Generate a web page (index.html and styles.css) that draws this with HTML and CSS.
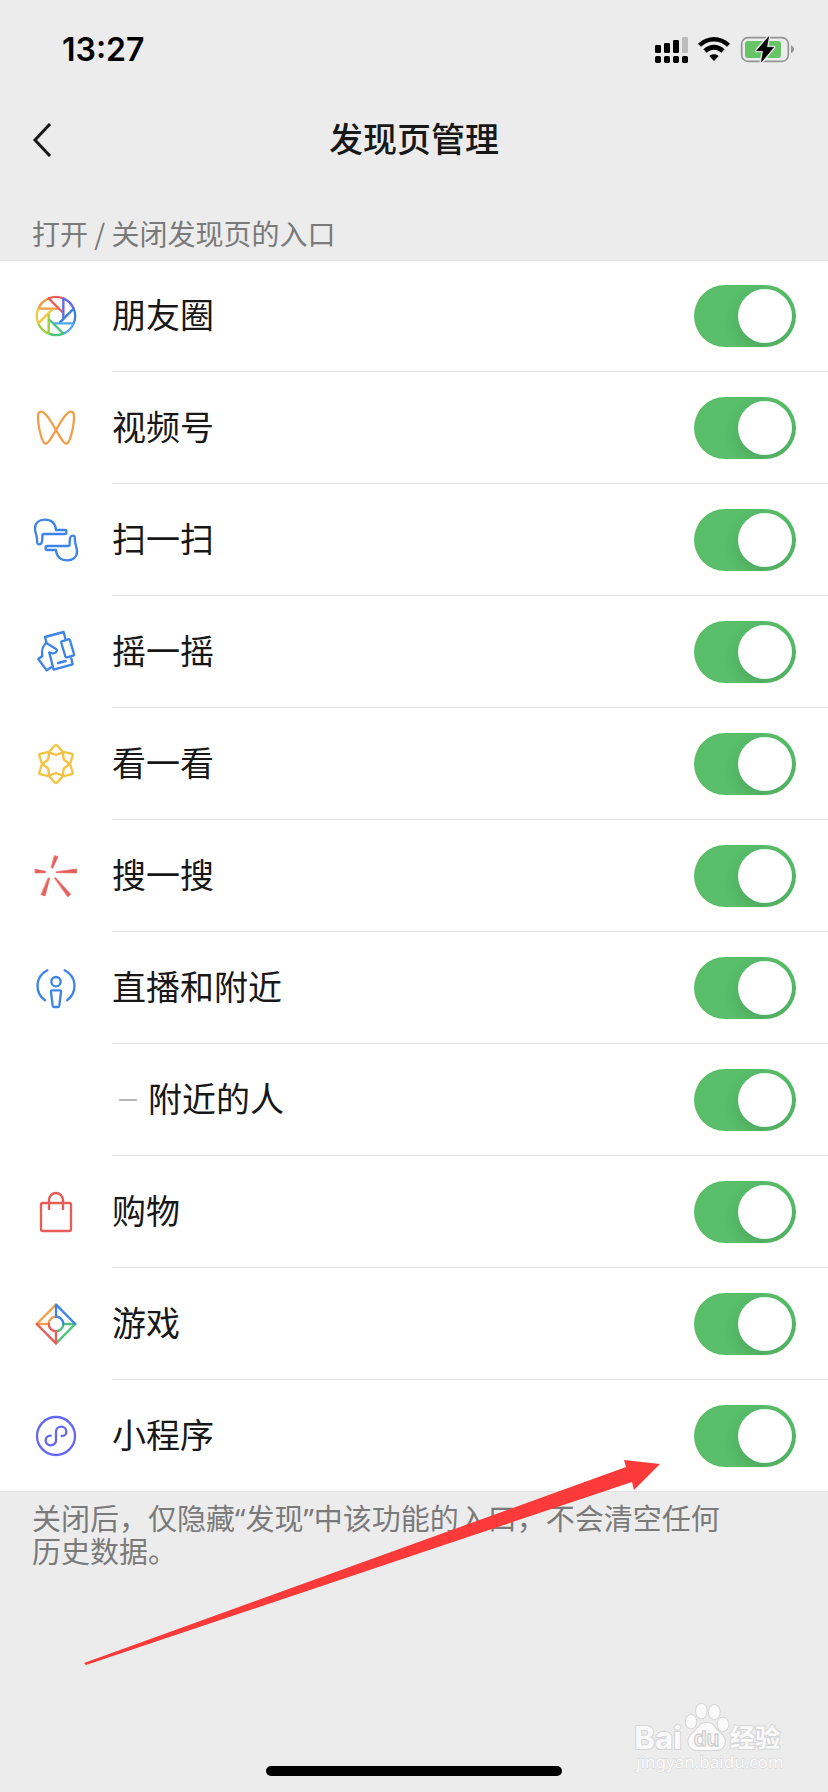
FILE: index.html
```html
<!DOCTYPE html>
<html lang="zh-CN">
<head>
<meta charset="utf-8">
<meta name="viewport" content="width=device-width, initial-scale=1">
<title>发现页管理</title>
<link rel="stylesheet" href="styles.css">
</head>
<body>
<div class="screen">
  <div class="status">
    <span class="clock">13:27</span>
    <div class="status-icons">
      <svg width="34" height="28" viewBox="102 48 102 84" aria-hidden="true">
        <rect x="105" y="75" width="18" height="24" rx="4"/>
        <rect x="132" y="69" width="18" height="30" rx="4"/>
        <rect x="159" y="60" width="18" height="39" rx="4"/>
        <rect x="186" y="51" width="18" height="48" rx="4" fill="#bdbdbd"/>
        <rect x="105" y="108" width="18" height="21" rx="5"/>
        <rect x="132" y="108" width="18" height="21" rx="5"/>
        <rect x="159" y="108" width="18" height="21" rx="5"/>
        <rect x="186" y="108" width="18" height="21" rx="5"/>
      </svg>
      <svg width="32" height="28" viewBox="238 48 96 84" aria-hidden="true">
        <path d="M238 71C266 44 306 44 334 71L325 80C303 59 269 59 247 80Z"/>
        <path d="M254 88C273 70 299 70 318 88L308 98C295 86 277 86 264 98Z"/>
        <path d="M272 108C280 101 292 101 300 108L286 123Z"/>
      </svg>
      <svg width="54" height="28" viewBox="360 48 162 84" aria-hidden="true">
        <rect x="365" y="53" width="140" height="71" rx="19" fill="none" stroke="#949494" stroke-width="5"/>
        <path d="M513 76C525 81 525 95 513 100Z" fill="#949494"/>
        <rect x="375" y="63" width="108" height="51" rx="10" fill="#65c466"/>
        <path d="M446 50L410 92H430L424 126L461 82H440Z" stroke="#ececec" stroke-width="10" stroke-linejoin="round"/>
        <path d="M446 50L410 92H430L424 126L461 82H440Z" stroke="#000" stroke-width="2" stroke-linejoin="round"/>
      </svg>
    </div>
  </div>

  <header class="nav">
    <button class="back" type="button" aria-label="返回">
      <svg width="20" height="36" viewBox="0 0 20 36" aria-hidden="true"><path d="M18 2L3 18L18 34" fill="none" stroke="#181818" stroke-width="3"/></svg>
    </button>
    <h1 class="title">发现页管理</h1>
  </header>

  <main class="content">
    <h2 class="caption">打开 / 关闭发现页的入口</h2>
    <ul class="list">
      <li class="row">
        <svg class="icon" viewBox="36 36 144 144" aria-hidden="true">
          <defs><path id="blade" d="M113 86H55A57 57 0 0 1 86 55"/></defs>
          <use href="#blade" stroke="#f09d48"/>
          <use href="#blade" stroke="#e75e58" transform="rotate(45 108 108)"/>
          <use href="#blade" stroke="#6467e8" transform="rotate(90 108 108)"/>
          <use href="#blade" stroke="#3d7fd6" transform="rotate(135 108 108)"/>
          <use href="#blade" stroke="#4da9f8" transform="rotate(180 108 108)"/>
          <use href="#blade" stroke="#50c17a" transform="rotate(225 108 108)"/>
          <use href="#blade" stroke="#9bcf3c" transform="rotate(270 108 108)"/>
          <use href="#blade" stroke="#f5c842" transform="rotate(315 108 108)"/>
        </svg>
        <div class="cell"><label class="name" for="s1">朋友圈</label><input class="switch" type="checkbox" id="s1" checked></div>
      </li>
      <li class="row">
        <svg class="icon" viewBox="36 372 144 144" aria-hidden="true">
          <path stroke="#efa04c" d="M108 450C96 430 78 395 63 395C52 395 53 412 55 428C58 455 68 491 77 491C87 491 98 466 108 450C120 430 138 395 153 395C164 395 163 412 161 428C158 455 148 491 139 491C129 491 118 466 108 450Z"/>
        </svg>
        <div class="cell"><label class="name" for="s2">视频号</label><input class="switch" type="checkbox" id="s2" checked></div>
      </li>
      <li class="row">
        <svg class="icon" viewBox="36 48 144 144" aria-hidden="true">
          <defs><path id="hand" d="M108 90H134C141 90 141 102 134 102H72Q67 102 67 107V114C67 122 65 133 58 133C49 133 52 126 51 118C51 107 45 99 45 86C45 68 58 59 74 59C92 59 106 68 108 90Z"/></defs>
          <g stroke="#3d84ea"><use href="#hand"/><use href="#hand" transform="rotate(180 108 120)"/></g>
        </svg>
        <div class="cell"><label class="name" for="s3">扫一扫</label><input class="switch" type="checkbox" id="s3" checked></div>
      </li>
      <li class="row">
        <svg class="icon" viewBox="36 384 144 144" aria-hidden="true">
          <g stroke="#3d84ea">
            <path d="M79 426L75 411L131 396L136 415"/>
            <path d="M125 424L145 418Q149 417 150 421L162 462Q163 466 159 467L141 472Q137 473 136 469L124 429Q123 425 125 424Z"/>
            <path d="M154 475L158 493L101 509L88 458"/>
            <path d="M88 458C98 462 107 459 110 454C112 450 110 448 107 446L79 429C69 436 64 452 67 468L55 477L80 511L94 502"/>
            <path d="M114 489L137 483"/>
          </g>
        </svg>
        <div class="cell"><label class="name" for="s4">摇一摇</label><input class="switch" type="checkbox" id="s4" checked></div>
      </li>
      <li class="row">
        <svg class="icon" viewBox="36 60 144 144" aria-hidden="true">
          <defs><path id="petal" d="M88 97L90 92Q93 89 97 85L104 77Q108 72 112 77L119 85Q123 89 126 92L128 97L108 105Z"/></defs>
          <g stroke="#f3c344">
            <use href="#petal"/>
            <use href="#petal" transform="rotate(60 108 132)"/>
            <use href="#petal" transform="rotate(120 108 132)"/>
            <use href="#petal" transform="rotate(180 108 132)"/>
            <use href="#petal" transform="rotate(240 108 132)"/>
            <use href="#petal" transform="rotate(300 108 132)"/>
          </g>
        </svg>
        <div class="cell"><label class="name" for="s5">看一看</label><input class="switch" type="checkbox" id="s5" checked></div>
      </li>
      <li class="row">
        <svg class="icon" viewBox="36 396 144 144" aria-hidden="true">
          <g fill="#e75e58" stroke="#e75e58" stroke-width="2">
            <path d="M104 407L114 410L98 445L94 443Z"/>
            <path d="M46 448L77 454V458L46 459Z"/>
            <path d="M110 455L170 447V459L110 458Z"/>
            <path d="M85 474L89 475L75 528L64 524Z"/>
            <path d="M104 474L107 473L152 523L144 530Z"/>
          </g>
        </svg>
        <div class="cell"><label class="name" for="s6">搜一搜</label><input class="switch" type="checkbox" id="s6" checked></div>
      </li>
      <li class="row">
        <svg class="icon" viewBox="36 72 144 144" aria-hidden="true">
          <g stroke="#3d84ea">
            <path d="M82 91C44 111 44 158 75 181M134 91C172 111 172 158 141 181"/>
            <circle cx="108" cy="125" r="14"/>
            <path d="M97 151H119Q124 151 123 156L118 197Q117 201 113 201H103Q99 201 98 197L93 156Q92 151 97 151Z"/>
          </g>
        </svg>
        <div class="cell"><label class="name" for="s7">直播和附近</label><input class="switch" type="checkbox" id="s7" checked></div>
      </li>
      <li class="row">
        <span class="icon"></span>
        <div class="cell"><span class="branch"></span><label class="name" for="s8">附近的人</label><input class="switch" type="checkbox" id="s8" checked></div>
      </li>
      <li class="row">
        <svg class="icon" viewBox="36 54 144 144" aria-hidden="true">
          <g stroke="#e75e58"><rect x="63" y="99" width="90" height="84" rx="5"/><path d="M87 120V90A21 21 0 0 1 129 90V120" stroke-linecap="butt"/></g>
        </svg>
        <div class="cell"><label class="name" for="s9">购物</label><input class="switch" type="checkbox" id="s9" checked></div>
      </li>
      <li class="row">
        <svg class="icon" viewBox="36 390 144 144" aria-hidden="true">
          <path stroke="#efa04c" d="M108 404L50 462H86A22 22 0 0 1 108 440"/>
          <path stroke="#50c17a" d="M108 520L166 462H130A22 22 0 0 1 108 484"/>
          <path stroke="#e75e58" d="M50 462L108 520V484A22 22 0 0 1 86 462"/>
          <path stroke="#3d84ea" d="M166 462L108 404V440A22 22 0 0 1 130 462"/>
        </svg>
        <div class="cell"><label class="name" for="s10">游戏</label><input class="switch" type="checkbox" id="s10" checked></div>
      </li>
      <li class="row">
        <svg class="icon" viewBox="36 726 144 144" aria-hidden="true">
          <g stroke="#6467f0">
            <circle cx="108" cy="798" r="57"/>
            <path d="M92 797C82 797 77 804 77 811C77 820 84 826 92 826C101 826 108 820 108 811V785C108 776 115 770 124 770C132 770 139 776 139 785C139 792 134 798 125 798"/>
          </g>
        </svg>
        <div class="cell"><label class="name" for="s11">小程序</label><input class="switch" type="checkbox" id="s11" checked></div>
      </li>
    </ul>
    <p class="note">关闭后，仅隐藏“发现”中该功能的入口，不会清空任何历史数据。</p>
    <svg class="arrow" width="578" height="208" viewBox="84 1458 578 208" aria-hidden="true">
      <path fill="#fb3a39" d="M84 1663L626 1467L624 1460L660 1464L634 1490L632 1482L86 1665Z"/>
    </svg>
  </main>

  <div class="home"></div>

  <svg class="watermark" width="180" height="90" viewBox="0 0 540 270" role="img" aria-label="Baidu 经验">
    <g fill="#fafafa" stroke="#d6d6d6" stroke-width="6" paint-order="stroke">
      <text class="wm-brand" x="43" y="177">Bai</text>
      <ellipse cx="213" cy="95" rx="16" ry="20"/>
      <ellipse cx="244" cy="63" rx="16" ry="22"/>
      <ellipse cx="283" cy="66" rx="16" ry="21"/>
      <ellipse cx="309" cy="103" rx="16" ry="20"/>
      <path d="M260 98C282 98 284 118 301 130C324 148 317 180 286 180C272 180 250 180 234 180C204 180 197 150 216 132C234 118 238 98 260 98Z"/>
      <text class="wm-cn" x="329" y="170">经验</text>
      <text class="wm-url" x="49" y="235" stroke-width="3">jingyan.baidu.com</text>
    </g>
    <text class="wm-du" x="221" y="167" fill="#fafafa" stroke="#d0d0d0" stroke-width="4">du</text>
  </svg>
</div>
</body>
</html>
```
FILE: styles.css
```css
* {
  box-sizing: border-box;
}

body {
  margin: 0;
  background: #ececec;
  color: #181818;
  font-family: "Noto Sans CJK SC", sans-serif;
}

.screen {
  position: relative;
  display: flex;
  flex-direction: column;
  min-height: 100vh;
}

.status {
  display: flex;
  align-items: center;
  justify-content: space-between;
  height: 100px;
  padding: 0 34px 0 62px;
}

.clock {
  color: #000;
  font: 600 32px/40px Inter, sans-serif;
}

.status-icons {
  display: flex;
  gap: 10px;
}

.nav {
  display: grid;
  grid-template-columns: 1fr auto 1fr;
  align-items: center;
  height: 80px;
  padding: 0 32px;
}

.back {
  display: flex;
  justify-self: start;
  padding: 0;
  border: 0;
  background: none;
}

.title {
  margin: 0;
  padding-bottom: 4px;
  font-size: 34px;
  font-weight: 500;
  line-height: 48px;
}

.content {
  position: relative;
  flex: 1;
}

.caption {
  margin: 0;
  padding: 36px 32px 10px;
  color: #7a7a7a;
  font-size: 28px;
  font-weight: 400;
  line-height: 34px;
}

.list {
  margin: 0;
  padding: 0;
  list-style: none;
  background: #fff;
  box-shadow: inset 0 1px #dfdfdf, inset 0 -1px #dfdfdf;
}

.row {
  display: flex;
  align-items: center;
  gap: 32px;
  padding-left: 32px;
}

.icon {
  flex: none;
  width: 48px;
  height: 48px;
  fill: none;
  stroke-width: 7px;
  stroke-linecap: round;
  stroke-linejoin: round;
}

.cell {
  display: flex;
  flex: 1;
  align-items: center;
  height: 112px;
  padding-right: 32px;
  box-shadow: inset 0 -1px #e2e2e2;
}

.name {
  padding-bottom: 4px;
  font-size: 34px;
  line-height: 48px;
}

.branch {
  width: 18px;
  height: 2px;
  margin: 0 11px 0 7px;
  background: #b5b5b5;
}

.switch {
  display: flex;
  justify-content: flex-start;
  width: 102px;
  height: 62px;
  margin: 0 0 0 auto;
  padding: 4px;
  overflow: hidden;
  border-radius: 31px;
  background: #dcdcdc;
  appearance: none;
}

.switch:checked {
  justify-content: flex-end;
  background: #58be6a;
}

.switch::before {
  width: 54px;
  height: 54px;
  border-radius: 50%;
  background: #fff;
  box-shadow: 0 6px 16px rgba(0, 0, 0, 0.12);
  content: "";
}

.note {
  margin: 0;
  padding: 10px 88px 0 32px;
  color: #7a7a7a;
  font-family: "Noto Sans", "Noto Sans CJK SC", sans-serif;
  font-size: 29px;
  line-height: 33px;
}

.arrow {
  position: absolute;
  left: 84px;
  bottom: 88px;
}

.home {
  align-self: center;
  width: 296px;
  height: 10px;
  margin: 12px 0 16px;
  border-radius: 5px;
  background: #000;
}

.watermark {
  position: absolute;
  right: 28px;
  bottom: 12px;
}

.wm-brand {
  font: 700 94px Inter, sans-serif;
}

.wm-cn {
  font: 700 76px "Noto Sans CJK SC", sans-serif;
}

.wm-url {
  font: 400 51px "Noto Sans", sans-serif;
}

.wm-du {
  font: 600 62px Inter, sans-serif;
}
```
